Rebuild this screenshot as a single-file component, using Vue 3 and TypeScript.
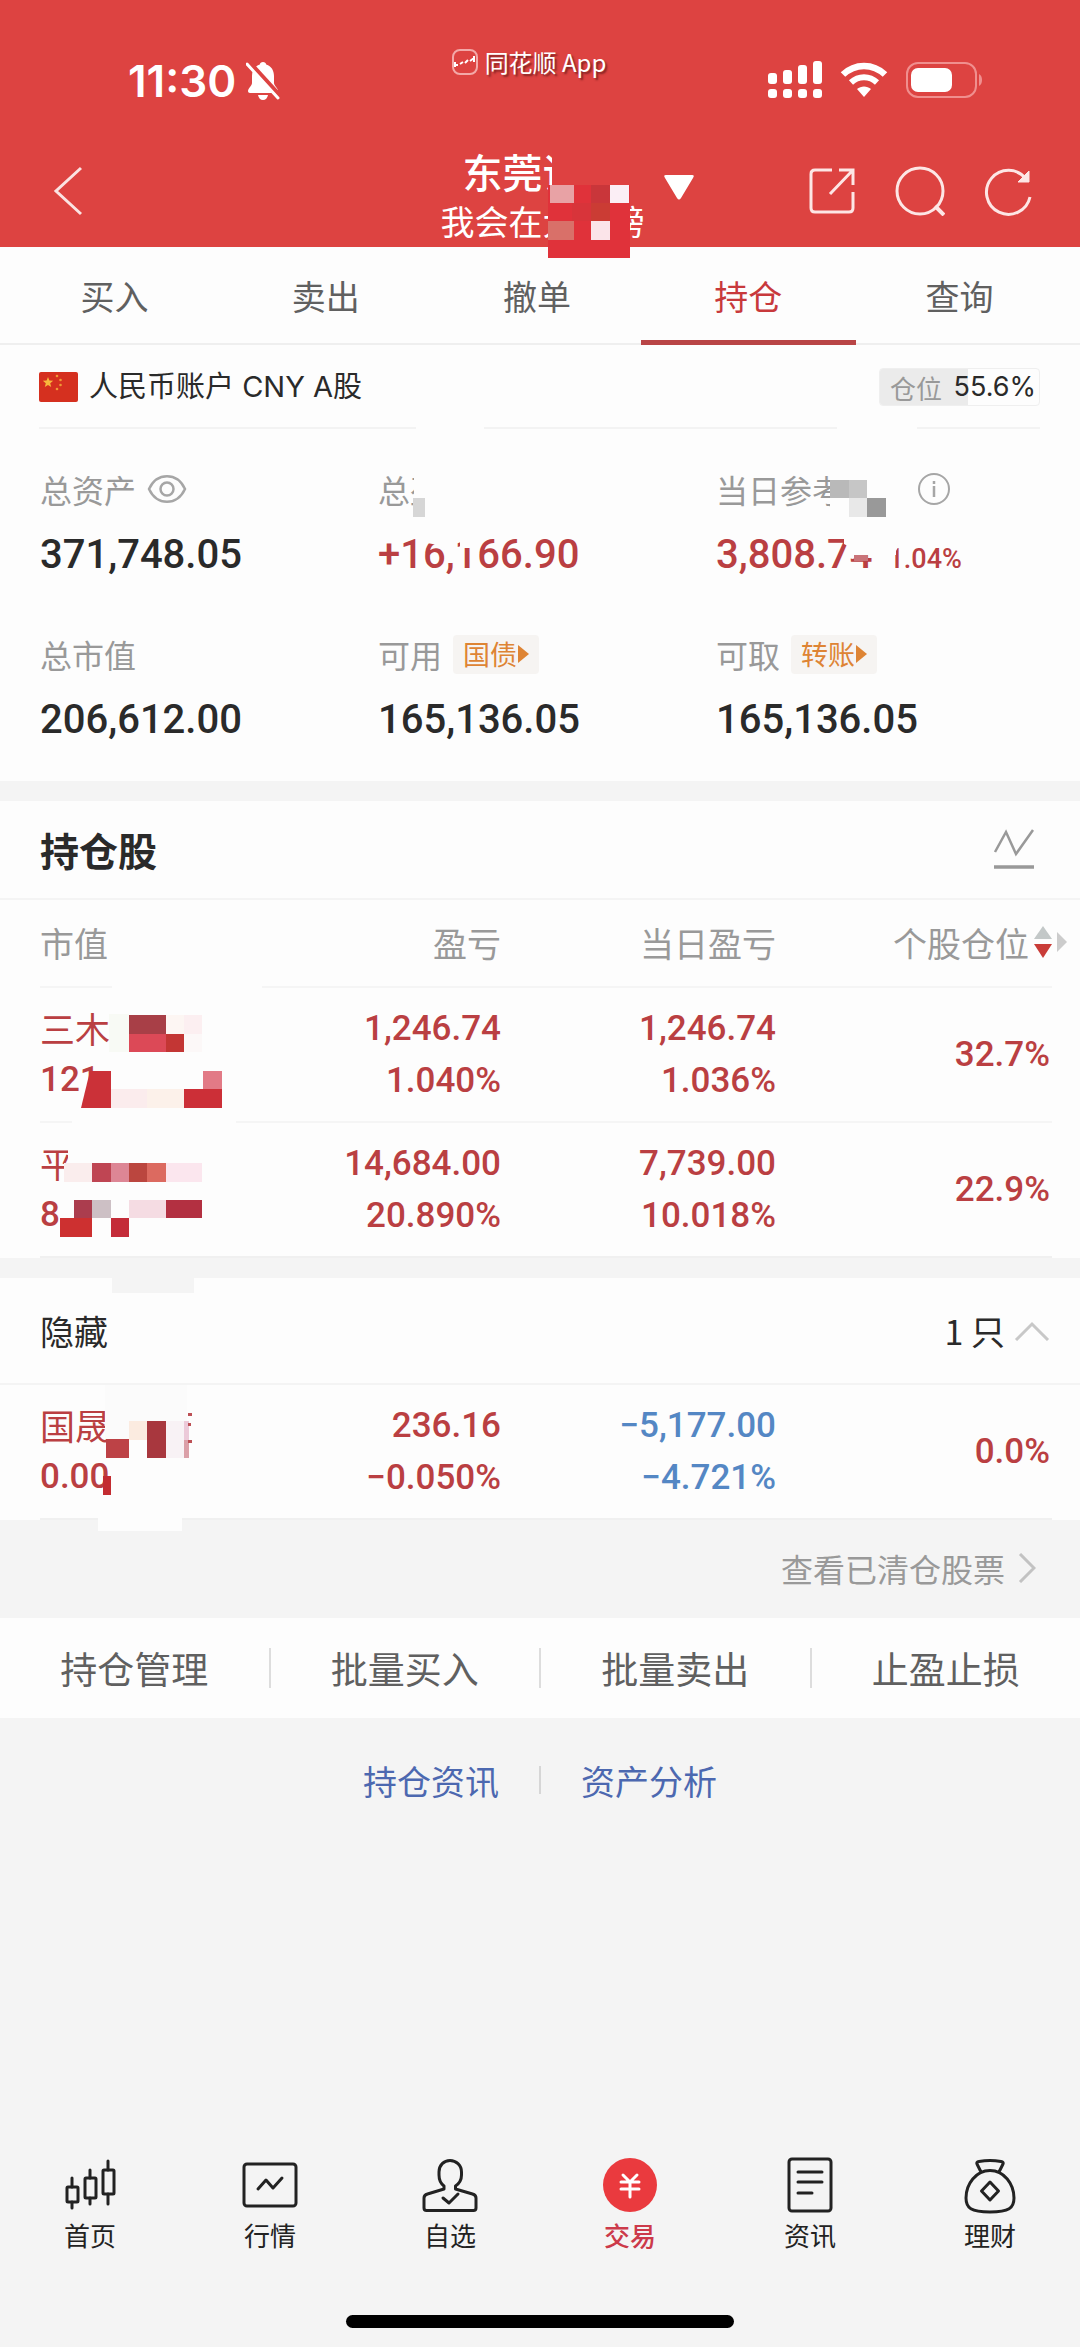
<script setup lang="ts">
type Tone = 'up' | 'down'
interface Block { x: number; y: number; w: number; h: number; c: string }
interface Holding {
  name: string
  code: string
  profit: [string, string]
  today: [string, string]
  todayTone: Tone
  share: string
  mask: Block[]
  wedge?: string
}

const tabs = ['买入', '卖出', '撤单', '持仓', '查询']
const activeTab = '持仓'
const position = 55.6
const actions = ['持仓管理', '批量买入', '批量卖出', '止盈止损']

const holdings: Holding[] = [
  {
    name: '三木',
    code: '121',
    profit: ['1,246.74', '1.040%'],
    today: ['1,246.74', '1.036%'],
    todayTone: 'up',
    share: '32.7%',
    mask: [
      { x: 72, y: 0, w: 150, h: 3, c: '#fdfdfd' },
      { x: 32, y: 135, w: 164, h: 4, c: '#fdfdfd' },
      { x: 69, y: 28, w: 20, h: 38, c: '#f8faf5' },
      { x: 89, y: 29, w: 37, h: 19, c: '#a83f47' },
      { x: 126, y: 29, w: 18, h: 19, c: '#fdf6f3' },
      { x: 144, y: 29, w: 18, h: 19, c: '#fceff1' },
      { x: 89, y: 48, w: 37, h: 18, c: '#dc4957' },
      { x: 126, y: 48, w: 18, h: 18, c: '#c33634' },
      { x: 144, y: 48, w: 18, h: 18, c: '#fcf8f8' },
      { x: 71, y: 103, w: 36, h: 19, c: '#fbeced' },
      { x: 107, y: 103, w: 37, h: 19, c: '#fcf1ea' },
      { x: 144, y: 103, w: 38, h: 19, c: '#cc2f37' },
      { x: 163, y: 85, w: 19, h: 18, c: '#e27a86' }
    ],
    wedge: '50,85 71,85 71,122 41,122'
  },
  {
    name: '平',
    code: '8',
    profit: ['14,684.00', '20.890%'],
    today: ['7,739.00', '10.018%'],
    todayTone: 'up',
    share: '22.9%',
    mask: [
      { x: 28, y: 24, w: 8, h: 18, c: '#fdfdfd' },
      { x: 24, y: 42, w: 28, h: 19, c: '#faeded' },
      { x: 52, y: 42, w: 19, h: 19, c: '#bf4553' },
      { x: 71, y: 42, w: 18, h: 19, c: '#dd8695' },
      { x: 89, y: 42, w: 18, h: 19, c: '#bb463f' },
      { x: 107, y: 42, w: 19, h: 19, c: '#dc6a60' },
      { x: 126, y: 42, w: 36, h: 19, c: '#fbe6ee' },
      { x: 34, y: 79, w: 18, h: 18, c: '#ab3d4e' },
      { x: 52, y: 79, w: 19, h: 18, c: '#cdc0c5' },
      { x: 89, y: 79, w: 37, h: 18, c: '#f5dce3' },
      { x: 126, y: 79, w: 36, h: 18, c: '#b33041' },
      { x: 20, y: 97, w: 32, h: 19, c: '#cd3030' },
      { x: 71, y: 97, w: 18, h: 19, c: '#c42c39' },
      { x: 72, y: 155, w: 82, h: 17, c: '#f4f4f4' }
    ]
  }
]

const hidden: Holding[] = [
  {
    name: '国晟',
    code: '0.00',
    profit: ['236.16', '−0.050%'],
    today: ['−5,177.00', '−4.721%'],
    todayTone: 'down',
    share: '0.0%',
    mask: [
      { x: 65, y: 2, w: 82, h: 54, c: '#fbfbfb' },
      { x: 66, y: 56, w: 23, h: 19, c: '#bd4246' },
      { x: 89, y: 38, w: 18, h: 19, c: '#fbebe0' },
      { x: 107, y: 38, w: 19, h: 37, c: '#a8373e' },
      { x: 126, y: 38, w: 18, h: 37, c: '#f8f2f5' },
      { x: 144, y: 38, w: 5, h: 19, c: '#eccad9' },
      { x: 144, y: 57, w: 5, h: 18, c: '#dba0a8' },
      { x: 148, y: 30, w: 4, h: 3, c: '#bd5055' },
      { x: 148, y: 40, w: 3, h: 3, c: '#bd5055' },
      { x: 148, y: 57, w: 4, h: 3, c: '#bd5055' },
      { x: 63, y: 93, w: 8, h: 19, c: '#c32c31' },
      { x: 58, y: 134, w: 84, h: 14, c: '#fdfdfd' }
    ]
  }
]

const headMask: Block[] = [
  { x: 4, y: 0, w: 78, h: 35, c: '#de4141' },
  { x: 0, y: 35, w: 82, h: 73, c: '#e0323a' },
  { x: 2, y: 35, w: 24, h: 18, c: '#e8a2a5' },
  { x: 43, y: 35, w: 19, h: 18, c: '#c9363a' },
  { x: 62, y: 35, w: 19, h: 18, c: '#fbeef5' },
  { x: 24, y: 53, w: 19, h: 18, c: '#d8343a' },
  { x: 43, y: 53, w: 19, h: 18, c: '#cb3c34' },
  { x: 0, y: 71, w: 26, h: 19, c: '#d97069' },
  { x: 43, y: 71, w: 19, h: 19, c: '#fbe4e9' }
]
</script>

<template>
  <div class="page">
    <header class="top">
      <div class="status">
        <div class="clock">
          <span>11:30</span>
          <svg width="34" height="40" viewBox="0 0 34 40" aria-hidden="true">
            <path d="M17 1c-1.800 0-3 1-3.200 2.400C8.500 5 6 9.500 6 15v7c0 3-4 5-4 8 0 1.200.8 2 2 2h26c1.200 0 2-.8 2-2 0-3-4-5-4-8v-7c0-5.500-2.500-10-7.800-11.600C20 2 18.800 1 17 1z" fill="#fff" />
            <path d="M12 34h10c-.6 3-2.400 5-5 5s-4.400-2-5-5z" fill="#fff" />
            <path d="M3 2 34 36" stroke="#dd4341" stroke-width="6" />
            <path d="M1 3 32 37" stroke="#fff" stroke-width="3" stroke-linecap="round" />
          </svg>
        </div>
        <div class="brand">
          <svg width="26" height="26" viewBox="0 0 26 26" fill="none" aria-hidden="true">
            <rect x="1" y="1" width="24" height="24" rx="7" stroke="#f3a9a8" stroke-width="2" />
            <path d="M2 16h4M8 15l3-2M13 14l3-3M18 12l4-3M3 13v5M22 7v6" stroke="#fff" stroke-width="2" />
          </svg>
          <span>同花顺 App</span>
        </div>
        <div class="signals">
          <svg width="54" height="38" viewBox="0 0 54 38" fill="#fff" aria-hidden="true">
            <rect x="0" y="12" width="9" height="11" rx="3" /><rect x="15" y="9" width="9" height="14" rx="3" />
            <rect x="30" y="4" width="9" height="19" rx="3" /><rect x="45" y="0" width="9" height="23" rx="3" />
            <rect x="0" y="28" width="9" height="9" rx="3" /><rect x="15" y="28" width="9" height="9" rx="3" />
            <rect x="30" y="28" width="9" height="9" rx="3" /><rect x="45" y="28" width="9" height="9" rx="3" />
          </svg>
          <svg width="48" height="36" viewBox="0 0 48 36" fill="none" aria-hidden="true">
            <path d="M3 12.500C15 1 33 1 45 12.500" stroke="#fff" stroke-width="6.500" />
            <path d="M11 20.500c7.500-7 18.500-7 26 0" stroke="#fff" stroke-width="6" />
            <path d="M24 35l-7-8c4-3.500 10-3.500 14 0z" fill="#fff" />
          </svg>
          <svg width="78" height="36" viewBox="0 0 78 36" aria-hidden="true">
            <rect x="1" y="1" width="69" height="34" rx="11" fill="none" stroke="#f08f8e" stroke-width="2" />
            <rect x="5" y="6" width="41" height="24" rx="7" fill="#fff" />
            <path d="M73 12c4 1.500 4 10.500 0 12z" fill="#f08f8e" />
          </svg>
        </div>
      </div>

      <div class="nav">
        <button class="icon-btn back" aria-label="返回">
          <svg width="32" height="50" viewBox="0 0 32 50" fill="none"><path d="M28 2 3 25l25 23" stroke="#fbe3e2" stroke-width="3" /></svg>
        </button>
        <div class="title">
          <h1>东莞证券</h1>
          <p>我会在大<i></i>榜</p>
          <svg class="mask head-mask" width="82" height="108" aria-hidden="true">
            <rect v-for="(b, i) in headMask" :key="i" :x="b.x" :y="b.y" :width="b.w" :height="b.h" :fill="b.c" />
          </svg>
          <button class="icon-btn switcher" aria-label="切换账户">
            <svg width="30" height="25" viewBox="0 0 30 25"><path d="M2 0h26q3 0 1 3L17 23q-2 3-4 0L1 3Q-1 0 2 0z" fill="#fff" /></svg>
          </button>
        </div>
        <div class="tools">
          <button class="icon-btn" aria-label="分享">
            <svg width="48" height="48" viewBox="0 0 48 48" fill="none" stroke="#fde6e5" stroke-width="3">
              <path d="M24 3H7q-4 0-4 4v34q0 4 4 4h34q4 0 4-4V25M31 3h14v15M45 3 22 27" />
            </svg>
          </button>
          <button class="icon-btn" aria-label="搜索">
            <svg width="50" height="50" viewBox="0 0 50 50" fill="none" stroke="#fde6e5" stroke-width="3">
              <circle cx="25" cy="25" r="23" /><path d="m40 40 9 9" stroke-width="4" />
            </svg>
          </button>
          <button class="icon-btn" aria-label="刷新">
            <svg width="48" height="50" viewBox="0 0 48 50" fill="none" stroke="#fde6e5" stroke-width="3">
              <path d="M46 31A22 22 0 1 1 42 13" /><path d="M45 5v11H34z" fill="#fde6e5" stroke-width="1" />
            </svg>
          </button>
        </div>
      </div>
    </header>

    <nav class="tabs">
      <a v-for="t in tabs" :key="t" href="#" :class="{ on: t === activeTab }">{{ t }}</a>
    </nav>

    <section class="account">
      <svg width="39" height="30" viewBox="0 0 39 30" aria-hidden="true">
        <rect width="39" height="30" rx="2" fill="#d5301f" />
        <path d="m9 5 1.400 3.600 3.800.2-3 2.400 1 3.800L9 12.900 5.800 15l1-3.800-3-2.400 3.800-.2z" fill="#f8b83c" />
        <g fill="#f09a35"><circle cx="18" cy="4" r="1.300" /><circle cx="21.500" cy="8" r="1.300" /><circle cx="21.500" cy="13" r="1.300" /><circle cx="18" cy="17" r="1.300" /></g>
      </svg>
      <span class="acct-name">人民币账户 CNY A股</span>
      <span class="level">
        <span class="level-fill" :style="{ width: position + '%' }"></span>
        <span class="level-label">仓位</span><span class="level-num">{{ position }}%</span>
      </span>
    </section>
    <div class="rules" aria-hidden="true"><span></span><i></i><span></span><i></i><span></span></div>

    <section class="stats">
      <div class="stat">
        <div class="label">总资产
          <svg width="40" height="30" viewBox="0 0 40 30" fill="none" stroke="#a6a6a6" stroke-width="2.500" aria-hidden="true">
            <path d="M2 15C10-2 30-2 38 15 30 32 10 32 2 15z" /><circle cx="20" cy="15" r="6.500" />
          </svg>
        </div>
        <div class="value">371,748.05</div>
      </div>
      <div class="stat">
        <div class="label">总盈</div>
        <div class="value up">+16,166.90</div>
        <svg class="mask stat-mask" width="180" height="100" aria-hidden="true">
          <path d="M36 0h60v50H36zM49 64h22l-2 18-9-6-11-2zM82 64h17l-3 15H82z" fill="#fdfdfd" />
          <rect x="35" y="29" width="12" height="19" fill="#d6d6d6" />
        </svg>
      </div>
      <div class="stat">
        <div class="label wide">当日参考
          <svg width="32" height="32" viewBox="0 0 32 32" fill="none" stroke="#a6a6a6" stroke-width="2" aria-hidden="true">
            <circle cx="16" cy="16" r="15" /><path d="M16 13v11M16 8v3" stroke-width="2.500" />
          </svg>
        </div>
        <div class="value up">3,808.74<small>1.04%</small></div>
        <svg class="mask stat-mask" width="240" height="110" aria-hidden="true">
          <path d="M114 4h60v46h-60zM128 62h52v24h-26l-18 4-3-2 1-10-6-3z" fill="#fdfdfd" />
          <path d="M172 70h14l-7 14-1 20h-6z" fill="#fdfdfd" />
          <rect x="114" y="11" width="19" height="18" fill="#b9b9b9" /><rect x="133" y="11" width="18" height="18" fill="#c6c6c6" />
          <rect x="133" y="29" width="18" height="19" fill="#e8e8e8" /><rect x="151" y="29" width="19" height="19" fill="#999" />
          <rect x="138" y="86" width="14" height="6" fill="#c97479" />
        </svg>
      </div>
      <div class="stat">
        <div class="label">总市值</div>
        <div class="value">206,612.00</div>
      </div>
      <div class="stat">
        <div class="label">可用
          <button class="chip">国债<svg width="11" height="18" viewBox="0 0 11 18"><path d="M0 0v18L11 9z" fill="#de8434" /></svg></button>
        </div>
        <div class="value">165,136.05</div>
      </div>
      <div class="stat">
        <div class="label">可取
          <button class="chip">转账<svg width="11" height="18" viewBox="0 0 11 18"><path d="M0 0v18L11 9z" fill="#de8434" /></svg></button>
        </div>
        <div class="value">165,136.05</div>
      </div>
    </section>

    <section class="panel">
      <div class="panel-head">
        <h2>持仓股</h2>
        <button class="icon-btn" aria-label="走势">
          <svg width="42" height="42" viewBox="0 0 42 42" fill="none" stroke="#999"><path d="M2 24 13 4l10 22L40 2" stroke-width="2.500" /><path d="M1 39h40" stroke-width="3.500" /></svg>
        </button>
      </div>
      <table>
        <thead>
          <tr>
            <th scope="col">市值</th>
            <th scope="col">盈亏</th>
            <th scope="col">当日盈亏</th>
            <th scope="col">
              <div class="sort">个股仓位
                <svg width="34" height="34" viewBox="0 0 34 34" aria-hidden="true">
                  <path d="M9 1 0 14h18z" fill="#c3c8c8" /><path d="M0 19h18L9 33z" fill="#c93c38" /><path d="M23 7v20l10-10z" fill="#ccc" />
                </svg>
              </div>
            </th>
          </tr>
        </thead>
        <tbody>
          <tr v-for="h in holdings" :key="h.name">
            <td class="up name">
              <div>{{ h.name }}</div><div class="num">{{ h.code }}</div>
              <svg class="mask row-mask" width="240" height="176" aria-hidden="true">
                <rect v-for="(b, i) in h.mask" :key="i" :x="b.x" :y="b.y" :width="b.w" :height="b.h" :fill="b.c" />
                <polygon v-if="h.wedge" :points="h.wedge" fill="#cb3138" />
              </svg>
            </td>
            <td class="num up"><div v-for="p in h.profit" :key="p">{{ p }}</div></td>
            <td class="num" :class="h.todayTone"><div v-for="p in h.today" :key="p">{{ p }}</div></td>
            <td class="num up">{{ h.share }}</td>
          </tr>
        </tbody>
      </table>
    </section>

    <section class="panel">
      <div class="panel-head fold">
        <h3>隐藏</h3>
        <button class="icon-btn count">1 只
          <svg width="36" height="20" viewBox="0 0 36 20" fill="none"><path d="m2 19 16-16 16 16" stroke="#c8c8c8" stroke-width="3" /></svg>
        </button>
      </div>
      <table>
        <tbody>
          <tr v-for="h in hidden" :key="h.name">
            <td class="up name">
              <div>{{ h.name }}</div><div class="num">{{ h.code }}</div>
              <svg class="mask row-mask" width="240" height="176" aria-hidden="true">
                <rect v-for="(b, i) in h.mask" :key="i" :x="b.x" :y="b.y" :width="b.w" :height="b.h" :fill="b.c" />
              </svg>
            </td>
            <td class="num up"><div v-for="p in h.profit" :key="p">{{ p }}</div></td>
            <td class="num" :class="h.todayTone"><div v-for="p in h.today" :key="p">{{ p }}</div></td>
            <td class="num up">{{ h.share }}</td>
          </tr>
        </tbody>
      </table>
    </section>

    <a class="cleared" href="#">查看已清仓股票
      <svg width="18" height="30" viewBox="0 0 18 30" fill="none" aria-hidden="true"><path d="m2 1 14 14L2 29" stroke="#c2c2c2" stroke-width="3" /></svg>
    </a>

    <div class="actions">
      <button v-for="a in actions" :key="a">{{ a }}</button>
    </div>

    <div class="links"><a href="#">持仓资讯</a><span></span><a href="#">资产分析</a></div>

    <footer>
      <nav class="dock">
        <a href="#">
          <svg viewBox="0 0 60 60"><path d="M12 23v9M12 47v6M30 15v8M30 43v6M48 6v9M48 39v10" /><rect x="7" y="32" width="11" height="15" rx="1" /><rect x="25" y="23" width="11" height="20" rx="1" /><rect x="43" y="15" width="11" height="24" rx="1" /></svg>
          首页
        </a>
        <a href="#">
          <svg viewBox="0 0 60 60"><rect x="4" y="9" width="52" height="42" rx="3" /><path d="m18 34 8-9 7 8 9-10" /></svg>
          行情
        </a>
        <a href="#">
          <svg viewBox="0 0 60 60"><path d="M24 34v-3c-4-3-5-7-5-11V17c0-7 5-11.500 11-11.500S41.500 10 41.500 17v3c0 4-1.500 8-6 11v3l17 5q3.500 1 3.500 4v10q0 2.500-2.500 2.500h-47Q4 55.500 4 53V43q0-3 3.500-4z" /><path d="m23 43 6 5 9-9" /></svg>
          自选
        </a>
        <a href="#" class="on">
          <svg viewBox="0 0 60 60"><circle cx="30" cy="30" r="27" fill="#ea3a3e" stroke="none" /><path d="m23 20 7 7 7-7M21 27h18M21 34h18M30 27v15" stroke="#fff" /></svg>
          交易
        </a>
        <a href="#">
          <svg viewBox="0 0 60 60"><rect x="9" y="4" width="42" height="52" rx="3" /><path d="M18 17h24M18 27h24M18 38h14" /></svg>
          资讯
        </a>
        <a href="#">
          <svg viewBox="0 0 60 60"><path d="M21 17l-4-8q-1-2 2-2.500 11-2 22 0 3 .5 2 2.500l-4 8M30 15.500C16 15.500 6 29 6 43c0 10 5 14 24 14s24-4 24-14C54 29 44 15.500 30 15.500z" /><path d="m30 27 8.500 9-8.500 9-8.500-9z" /></svg>
          理财
        </a>
      </nav>
      <div class="home-bar"></div>
    </footer>
  </div>
</template>

<style>
body { background: #f4f4f4; }
</style>

<style scoped>
.page {
  min-height: 100vh;
  display: flex;
  flex-direction: column;
  background: #f4f4f4;
  color: #2a2a2a;
  font-family: "Noto Sans CJK SC", sans-serif;
  font-size: 34px;
}
* { box-sizing: border-box; }
h1, h2, h3, p { margin: 0; font-weight: 400; }
a { color: inherit; text-decoration: none; }
button { border: 0; padding: 0; background: none; color: inherit; font: inherit; }
svg { display: block; flex: none; }
.icon-btn { display: flex; align-items: center; }
.mask { position: absolute; pointer-events: none; }
.up { color: #ba3f42; }
.down { color: #5487c4; }

.top { background: #dd4341; color: #fff; }
.status {
  height: 149px;
  padding: 12px 96px 0 128px;
  display: grid;
  grid-template-columns: 1fr auto 1fr;
  align-items: center;
}
.clock { display: flex; align-items: center; gap: 10px; font: 600 44px/50px Inter, sans-serif; }
.brand {
  display: flex;
  align-items: center;
  gap: 7px;
  margin: 0 54px 38px 0;
  font-size: 24px;
  line-height: 30px;
  text-shadow: 2px 2px 2px rgba(90, 20, 20, 0.7);
}
.signals { display: flex; justify-content: flex-end; align-items: center; gap: 18px; margin-bottom: 2px; }
.nav {
  height: 98px;
  padding: 0 48px 0 53px;
  display: grid;
  grid-template-columns: 1fr auto 1fr;
}
.back { height: 84px; justify-self: start; }
.title { position: relative; text-align: center; z-index: 1; margin-top: -2px; }
.title h1 { font-size: 40px; line-height: 49px; font-weight: 500; }
.title p { font-size: 34px; line-height: 49px; }
.title i { display: inline-block; width: 34px; }
.head-mask { left: 107px; top: 3px; }
.switcher { position: absolute; left: 100%; top: 28px; margin-left: 19px; }
.tools { height: 84px; display: flex; justify-content: flex-end; align-items: center; gap: 39px; }

.tabs {
  height: 98px;
  padding: 0 15px 0 9px;
  display: flex;
  background: #fdfdfd;
  border-bottom: 2px solid #efefef;
  color: #606060;
}
.tabs a { flex: 1; line-height: 98px; text-align: center; position: relative; }
.tabs .on { color: #c8393c; }
.tabs .on::after { content: ""; position: absolute; left: -2px; right: -2px; bottom: -2px; height: 5px; background: #b94546; }

.account {
  height: 82px;
  padding: 2px 40px 0 39px;
  display: flex;
  align-items: center;
  gap: 11px;
  background: #fdfdfd;
}
.acct-name { font: 29px/40px Inter, "Noto Sans CJK SC", sans-serif; flex: 1; }
.level {
  position: relative;
  width: 161px;
  height: 38px;
  display: flex;
  align-items: center;
  justify-content: space-between;
  padding: 0 3px 0 10px;
  border: 1px solid #efefef;
  border-radius: 4px;
  overflow: hidden;
}
.level-fill { position: absolute; left: 0; top: 0; bottom: 0; background: #ebebeb; }
.level-label { position: relative; font-size: 26px; color: #999; }
.level-num { position: relative; font: 27px/38px Inter, sans-serif; }
.rules { display: grid; grid-template-columns: 377fr 68fr 353fr 80fr 123fr; padding: 0 40px 0 39px; background: #fdfdfd; }
.rules span { height: 2px; background: #f3f3f3; }

.stats {
  padding: 38px 26px 17px 40px;
  display: grid;
  grid-template-columns: repeat(3, 1fr);
  row-gap: 33px;
  background: #fdfdfd;
}
.stat { position: relative; }
.label { height: 44px; display: flex; align-items: center; gap: 11px; font-size: 32px; line-height: 44px; color: #999; white-space: nowrap; }
.wide { gap: 74px; }
.value { height: 88px; font: 500 40px/88px Roboto, sans-serif; white-space: nowrap; }
.value small { font-size: 27px; margin-left: 16px; }
.stat-mask { left: 0; top: 2px; }
.chip {
  height: 39px;
  display: flex;
  align-items: center;
  gap: 1px;
  padding: 0 10px;
  border-radius: 4px;
  background: #f6f4f2;
  color: #de8434;
  font-size: 27px;
}

.panel { background: #fdfdfd; margin-top: 20px; }
.panel-head {
  height: 99px;
  padding: 0 45px 2px 40px;
  display: flex;
  align-items: center;
  justify-content: space-between;
  border-bottom: 2px solid #f4f4f4;
}
.panel-head h2 { font-size: 39px; font-weight: 700; }
.panel-head h3 { font-size: 34px; }
.fold { height: 107px; padding: 0 30px 0 40px; }
.count { gap: 9px; }
table {
  width: calc(100% - 68px);
  margin: 0 28px 0 40px;
  border-spacing: 0;
  table-layout: fixed;
}
th { height: 88px; padding: 0 0 2px; font-weight: 400; color: #999; border-bottom: 2px solid #f5f5f5; text-align: right; white-space: nowrap; }
th:first-child, td:first-child { width: 185px; text-align: left; }
th:last-child, td:last-child { width: 276px; }
.sort { display: flex; justify-content: flex-end; align-items: center; gap: 5px; margin-right: -16px; }
th:nth-child(3), td:nth-child(3) { width: 275px; }
td { height: 135px; padding: 15px 0 14px; text-align: right; line-height: 52px; border-bottom: 2px solid #f5f5f5; }
td:last-child { padding-right: 2px; }
tbody tr:last-child td { border-bottom-color: #f0f0f0; }
td.name { position: relative; padding: 14px 0 15px; font-size: 35px; }
.num { font-family: Roboto, sans-serif; font-weight: 500; font-size: 35px; }
.row-mask { left: 0; top: -2px; z-index: 1; }

.cleared {
  height: 98px;
  padding: 0 44px 2px 0;
  display: flex;
  align-items: center;
  justify-content: flex-end;
  gap: 13px;
  font-size: 32px;
  color: #999;
}
.actions { height: 100px; display: flex; align-items: center; background: #fdfdfd; }
.actions button { flex: 1; height: 40px; line-height: 40px; font-size: 37px; color: #606060; }
.actions button + button { border-left: 2px solid #ddd; }
.links { height: 124px; display: flex; justify-content: center; align-items: center; gap: 40px; color: #4c68b0; }
.links span { width: 2px; height: 28px; background: #d6d6d6; }

footer { margin-top: auto; padding-bottom: 19px; }
.dock { display: flex; padding-bottom: 64px; font-size: 26px; line-height: 32px; color: #222; }
.dock a { flex: 1; display: flex; flex-direction: column; align-items: center; gap: 4px; }
.dock svg { width: 60px; height: 60px; fill: none; stroke: #222; stroke-width: 3; stroke-linecap: round; stroke-linejoin: round; }
.dock .on { color: #cc3a4a; font-weight: 500; }
.home-bar { width: 36%; height: 13px; margin: 0 auto; border-radius: 7px; background: #000; }
</style>
